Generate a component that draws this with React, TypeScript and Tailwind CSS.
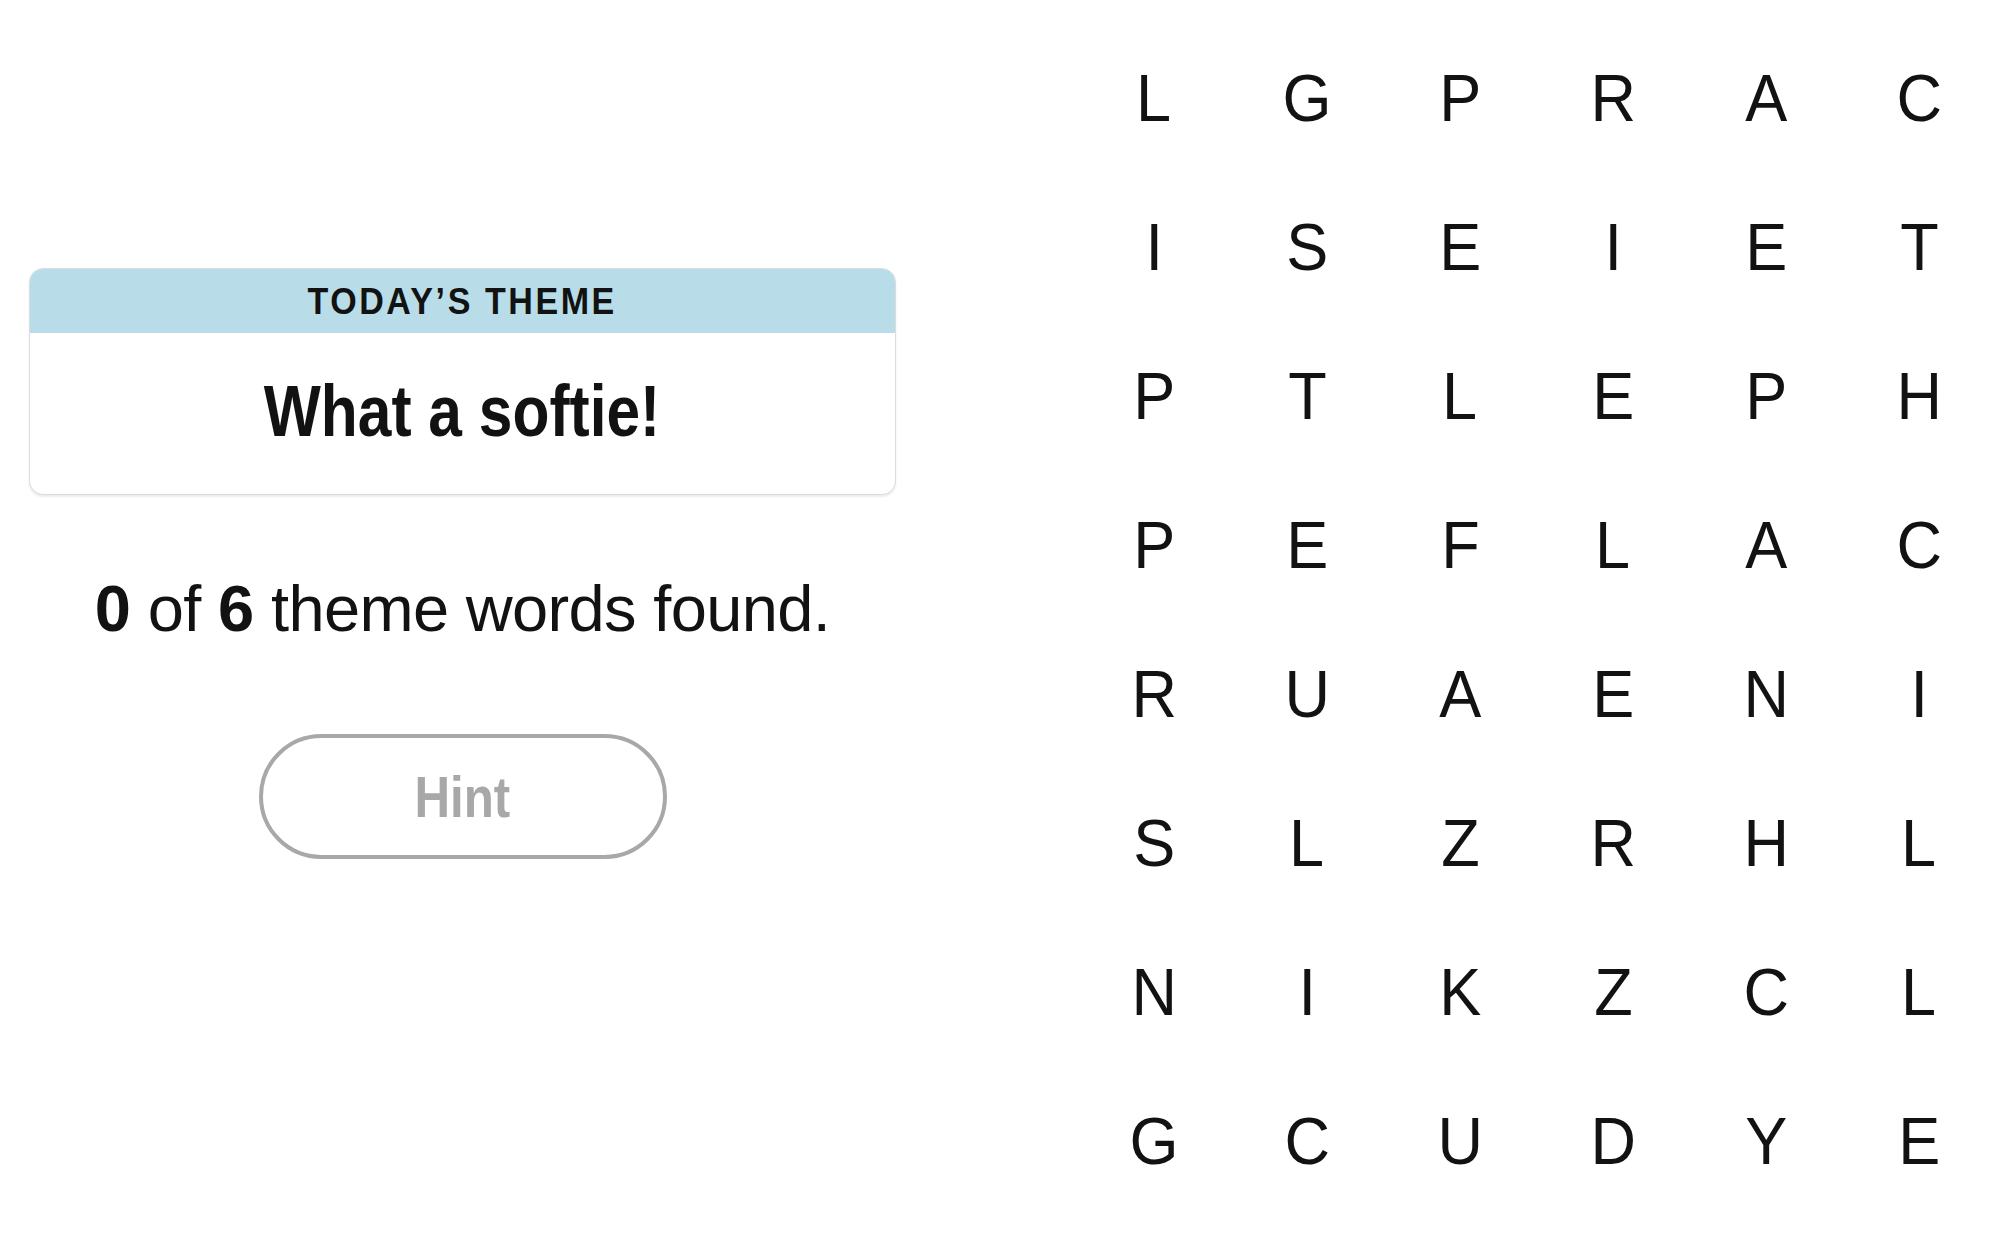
import React from 'react';

const ROWS = [
  'LGPRAC',
  'ISEIET',
  'PTLEPH',
  'PEFLAC',
  'RUAENI',
  'SLZRHL',
  'NIKZCL',
  'GCUDYE',
];

const sans = "font-['Liberation_Sans',Arial,sans-serif]";

function ThemeCard() {
  return (
    <div className="w-[867px] rounded-[14px] border border-[#dcdcdc] bg-white shadow-[0_2px_2px_rgba(0,0,0,0.08)] overflow-hidden">
      <div className="h-[64px] bg-[#b8dde9] flex items-center justify-center">
        <span className={`${sans} inline-block scale-x-[0.92] text-[37px] font-bold tracking-[0.075em] text-[#121212] leading-none`}>
          TODAY’S THEME
        </span>
      </div>
      <div className="h-[161px] pb-[6px] flex items-center justify-center">
        <span className={`${sans} inline-block scale-x-[0.84] text-[72px] font-bold text-[#121212] leading-none`}>
          What a softie!
        </span>
      </div>
    </div>
  );
}

export default function App() {
  return (
    <div className="w-[2000px] h-[1240px] bg-white flex overflow-hidden">
      {/* Left panel: theme + progress + hint */}
      <div className="ml-[29px] w-[867px] shrink-0 pt-[268px] flex flex-col items-center">
        <ThemeCard />
        <p className={`${sans} mt-[81px] text-[65px] leading-none text-[#121212] tracking-[-0.01em]`}>
          <b>0</b> of <b>6</b> theme words found.
        </p>
        <button
          className={`${sans} mt-[93px] w-[408px] h-[125px] rounded-full border-[4px] border-[#a8a8a8] bg-white flex items-center justify-center`}
        >
          <span className="inline-block scale-x-[0.85] text-[58px] font-bold text-[#a8a8a8] leading-none">
            Hint
          </span>
        </button>
      </div>

      {/* Letter board */}
      <div className="ml-[188px] pt-[23px] grid grid-cols-[repeat(6,140px)] auto-rows-[149px] gap-x-[13px]">
        {ROWS.flatMap((row, r) =>
          row.split('').map((ch, c) => (
            <div
              key={`${r}-${c}`}
              className={`${sans} flex items-center justify-center text-[67px] leading-none text-[#121212]`}
            >
              <span className="inline-block scale-x-[0.94]">{ch}</span>
            </div>
          ))
        )}
      </div>
    </div>
  );
}
